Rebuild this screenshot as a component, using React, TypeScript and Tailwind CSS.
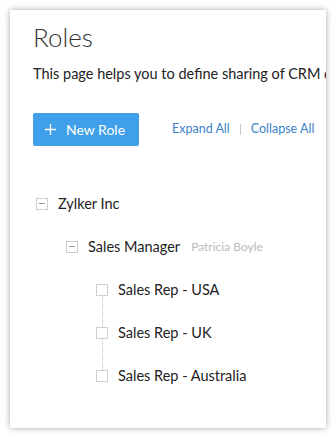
export default function App() {
  const reps = ["Sales Rep - USA", "Sales Rep - UK", "Sales Rep - Australia"];

  return (
    <div className="w-[336px] h-[438px] bg-white pt-[10px] pl-[10px]" style={{ fontFamily: "Lato, 'Noto Sans', sans-serif" }}>
      <div className="w-[316px] h-[418px] bg-white overflow-hidden shadow-[0_0_6px_rgba(0,0,0,0.35)] pl-[23px] pt-[11px]">
        <h1 className="text-[26px] leading-[32px] font-light text-[#333]">Roles</h1>
        <p className="mt-[12px] text-[14.5px] leading-[18px] text-[#222] whitespace-nowrap">
          This page helps you to define sharing of CRM data
        </p>

        {/* Actions */}
        <div className="mt-[30px] flex items-center">
          <button className="w-[106px] h-[33px] rounded-[2px] bg-[#3f9fe9] text-white text-[14px] flex items-center pl-[12px] gap-[10px]">
            <svg width="11" height="11" viewBox="0 0 11 11" className="shrink-0">
              <path d="M5.5 0v11M0 5.5h11" stroke="white" strokeWidth="1.3" />
            </svg>
            New Role
          </button>
          <div className="ml-[33px] flex items-center text-[12.5px] text-[#3b82c8]">
            <span>Expand All</span>
            <span className="mx-[10px] w-px h-[11px] bg-[#c8c8c8]" />
            <span>Collapse All</span>
          </div>
        </div>

        {/* Tree */}
        <div className="mt-[36px] text-[14.5px] text-[#222]">
          <div className="h-[43px] flex items-center pl-[3px]">
            <Box minus />
            <span className="ml-[10px]">Zylker Inc</span>
          </div>
          <div className="h-[43px] flex items-center pl-[33px]">
            <Box minus />
            <span className="ml-[10px]">Sales Manager</span>
            <span className="ml-[11px] text-[12px] text-[#bbbbbb]">Patricia Boyle</span>
          </div>
          <div className="pl-[63px]">
            {reps.map((r, i) => (
              <div key={r} className="relative h-[43px] flex items-center">
                {i < reps.length - 1 && (
                  <div className="absolute left-[5.5px] top-[28px] h-[31px] border-l border-dotted border-[#bbbbbb]" />
                )}
                <Box />
                <span className="ml-[10px]">{r}</span>
              </div>
            ))}
          </div>
        </div>
      </div>
    </div>
  );
}

function Box({ minus = false }: { minus?: boolean }) {
  return (
    <span className="w-[12px] h-[12px] border border-[#cfcfcf] bg-white flex items-center justify-center shrink-0">
      {minus && <span className="w-[6px] h-px bg-[#999]" />}
    </span>
  );
}
